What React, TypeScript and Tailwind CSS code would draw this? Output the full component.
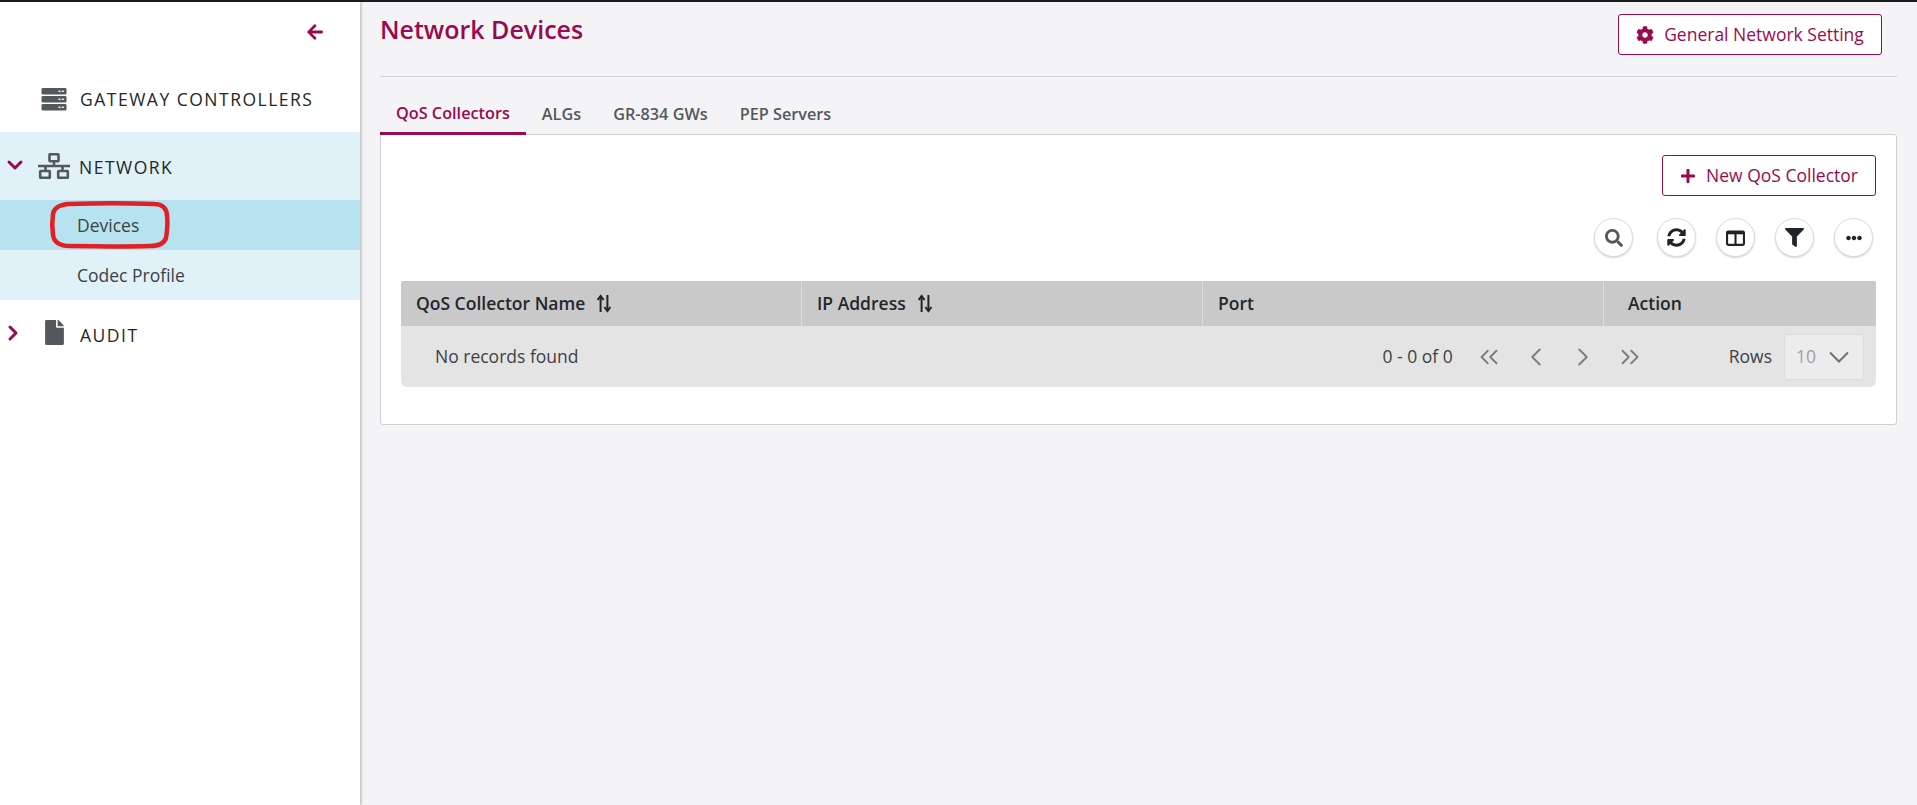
import React from "react";
import { FaCog, FaPlus, FaSearch, FaFilter, FaEllipsisH, FaArrowLeft, FaFile, FaSyncAlt } from "react-icons/fa";
import { ChevronDown, ChevronRight, ChevronLeft, ChevronsLeft, ChevronsRight } from "lucide-react";

const Servers = () => (
  <svg width="26" height="23" viewBox="0 0 26 23" fill="#53585b">
    <rect x="0.5" y="0" width="25" height="6.6" rx="1.4" />
    <rect x="0.5" y="8" width="25" height="6.6" rx="1.4" />
    <rect x="0.5" y="16" width="25" height="6.6" rx="1.4" />
    <g fill="#ffffff">
      <rect x="17.5" y="2.6" width="2" height="1.4" /><rect x="20.8" y="2.6" width="2" height="1.4" />
      <rect x="17.5" y="10.6" width="2" height="1.4" /><rect x="20.8" y="10.6" width="2" height="1.4" />
      <rect x="17.5" y="18.6" width="2" height="1.4" /><rect x="20.8" y="18.6" width="2" height="1.4" />
    </g>
  </svg>
);

const NetworkIcon = () => (
  <svg width="32" height="26" viewBox="0 0 32 26" fill="none" stroke="#53585b" strokeWidth="2.6">
    <rect x="11.5" y="1.3" width="9" height="7" rx="0.5" />
    <path d="M16 8v5M0 13h32" />
    <path d="M7.5 13v5M24.5 13v5" />
    <rect x="2.2" y="18" width="9.6" height="6.8" rx="0.5" />
    <rect x="20.2" y="18" width="9.6" height="6.8" rx="0.5" />
  </svg>
);

const SortIcon = () => (
  <svg width="16" height="19" viewBox="0 0 16 19" fill="none" stroke="#1f2428" strokeWidth="2">
    <path d="M4.6 18V2" />
    <path d="M1.6 6l3-4 3 4" />
    <path d="M11.4 1v16" />
    <path d="M8.4 13l3 4 3-4" />
  </svg>
);

const ColumnsIcon = () => (
  <svg width="19" height="16" viewBox="0 0 18 15" fill="none" stroke="#1f2428" strokeWidth="2">
    <rect x="1" y="1.5" width="16" height="12.5" rx="1" />
    <path d="M1 2.5h16" strokeWidth="3" />
    <path d="M9 2v12" />
  </svg>
);

const RoundButton = ({ children, className = "" }: { children: React.ReactNode; className?: string }) => (
  <button className={`w-[39px] h-[39px] rounded-full bg-white border border-[#dcdcdc] shadow-[0_1px_2px_rgba(0,0,0,0.18)] flex items-center justify-center ${className}`}>
    {children}
  </button>
);

const Tab = ({ label, active }: { label: string; active?: boolean }) => (
  <div
    className={
      active
        ? "h-[41px] px-[16px] pt-[1px] flex items-center border-b-[3px] border-[#990a4f] text-[#990a4f] font-semibold"
        : "h-[41px] px-[16px] pb-[1px] flex items-center text-[#53585b] font-semibold"
    }
  >
    {label}
  </div>
);

const HeaderCell = ({ label, sort, className }: { label: string; sort?: boolean; className: string }) => (
  <div className={`flex items-center font-semibold text-[#23272a] ${className}`}>
    <span>{label}</span>
    {sort && <span className="ml-[11px] flex"><SortIcon /></span>}
  </div>
);

export default function App() {
  return (
    <div className="h-[805px] w-full overflow-hidden flex flex-col bg-[#f4f4f6] text-[17.5px]" style={{ fontFamily: '"Open Sans", "Noto Sans", sans-serif' }}>
      <div className="h-[2px] bg-[#1c1c1c] shrink-0" />
      <div className="flex flex-1 min-h-0">
        <aside className="relative w-[360px] shrink-0 bg-white shadow-[1px_0_3px_rgba(0,0,0,0.28)]">
          <div className="h-[68px] flex justify-end pr-[36px] pt-[21px] text-[#990a4f]">
            <FaArrowLeft size={18} />
          </div>
          <div className="h-[62px] pb-[4px] flex items-center pl-[41px] gap-[13px] text-[17.5px] tracking-[1.5px] text-[#23272a]">
            <Servers />
            <span>GATEWAY CONTROLLERS</span>
          </div>
          <div className="bg-[#e0f1f8]">
            <div className="h-[68px] flex items-center text-[17.5px] tracking-[1.5px] text-[#23272a]">
              <ChevronDown size={24} strokeWidth={3} className="text-[#990a4f] ml-[3px] mb-[2px]" />
              <span className="ml-[11px] mr-[9px] flex"><NetworkIcon /></span>
              <span className="mt-[2px]">NETWORK</span>
            </div>
            <div className="h-[50px] flex items-center pl-[77px] bg-[#b6e3ef] text-[#3c4144]">Devices</div>
            <div className="h-[50px] flex items-center pl-[77px] text-[#3c4144]">Codec Profile</div>
          </div>
          <div className="h-[68px] flex items-center text-[17.5px] tracking-[1.5px] text-[#23272a]">
            <ChevronRight size={24} strokeWidth={3} className="text-[#990a4f] ml-[1px] mb-[2px]" />
            <span className="ml-[17px] mr-[13px] mb-[4px] flex text-[#53585b]"><FaFile size={25} /></span>
            <span className="mt-[2px]">AUDIT</span>
          </div>
          <svg className="absolute left-0 top-0" width="360" height="300" fill="none">
            <path
              d="M68 202 C95 201 130 201 154 202 C163 202 167 207 167 214 C168 222 167 230 166 236 C164 242 158 244 150 244 C120 245 95 244 70 244 C60 244 54 240 53 233 C52 226 52 219 53 212 C54 205 60 203 68 202 Z"
              stroke="#e21f26"
              strokeWidth="4.5"
            />
          </svg>
        </aside>

        <main className="flex-1 min-w-0 pl-[20px] pr-[20px]">
          <div className="h-[75px] flex justify-between border-b border-[#cfcfd3]">
            <h1 className="text-[25px] leading-[34px] mt-[10px] font-semibold text-[#990a4f]">Network Devices</h1>
            <button className="mt-[12px] mr-[15px] w-[264px] h-[41px] rounded-[3px] border border-[#990a4f] bg-white flex items-center justify-center gap-[10px] text-[17.5px] text-[#990a4f]">
              <FaCog size={18} />
              <span>General Network Setting</span>
            </button>
          </div>

          <div className="flex mt-[17px] text-[16.25px]">
            <Tab label="QoS Collectors" active />
            <Tab label="ALGs" />
            <Tab label="GR-834 GWs" />
            <Tab label="PEP Servers" />
          </div>

          <div className="h-[291px] -mt-[1px] bg-white border border-[#cfcfd3] rounded-[3px] px-[20px] pt-[20px]">
            <div className="flex justify-end">
              <button className="w-[214px] h-[41px] rounded-[3px] border border-[#990a4f] bg-white flex items-center justify-center gap-[10px] text-[17.5px] text-[#990a4f]">
                <FaPlus size={16} />
                <span>New QoS Collector</span>
              </button>
            </div>
            <div className="flex justify-end gap-[20px] mt-[22px] pr-[3px]">
              <RoundButton className="mr-[4px]"><FaSearch size={18} className="text-[#53585b]" /></RoundButton>
              <RoundButton><FaSyncAlt size={19} className="text-[#1f2428]" /></RoundButton>
              <RoundButton><ColumnsIcon /></RoundButton>
              <RoundButton><FaFilter size={19} className="text-[#1f2428]" /></RoundButton>
              <RoundButton><FaEllipsisH size={16} className="text-[#1f2428]" /></RoundButton>
            </div>

            <div className="mt-[24px]">
              <div className="h-[45px] flex bg-[#c9c9c9] rounded-t-[2px]">
                <HeaderCell label="QoS Collector Name" sort className="w-[401px] pl-[15px] border-r border-[#dedede]" />
                <HeaderCell label="IP Address" sort className="w-[401px] pl-[15px] border-r border-[#dedede]" />
                <HeaderCell label="Port" className="w-[401px] pl-[15px] border-r border-[#dedede]" />
                <HeaderCell label="Action" className="flex-1 pl-[24px]" />
              </div>
              <div className="h-[61px] flex items-center bg-[#e4e4e4] rounded-b-[6px] pl-[34px] pr-[12px] text-[#3c4144]">
                <span>No records found</span>
                <span className="ml-auto">0 - 0 of 0</span>
                <div className="flex items-center ml-[21px] gap-[17px] text-[#7d7d7d]">
                  <ChevronsLeft size={30} strokeWidth={1.5} />
                  <ChevronLeft size={30} strokeWidth={1.5} />
                  <ChevronRight size={30} strokeWidth={1.5} />
                  <ChevronsRight size={30} strokeWidth={1.5} />
                </div>
                <span className="ml-[84px]">Rows</span>
                <div className="ml-[12px] w-[80px] h-[46px] bg-[#ececec] border border-[#dcdcdc] rounded-[3px] flex items-center pl-[11px] gap-[13px] text-[#a0a0a0]">
                  <span>10</span>
                  <svg width="20" height="12" viewBox="0 0 20 12" fill="none" stroke="#6f6f6f" strokeWidth="2">
                    <path d="M1 1.5l9 9 9-9" />
                  </svg>
                </div>
              </div>
            </div>
          </div>
        </main>
      </div>
    </div>
  );
}
